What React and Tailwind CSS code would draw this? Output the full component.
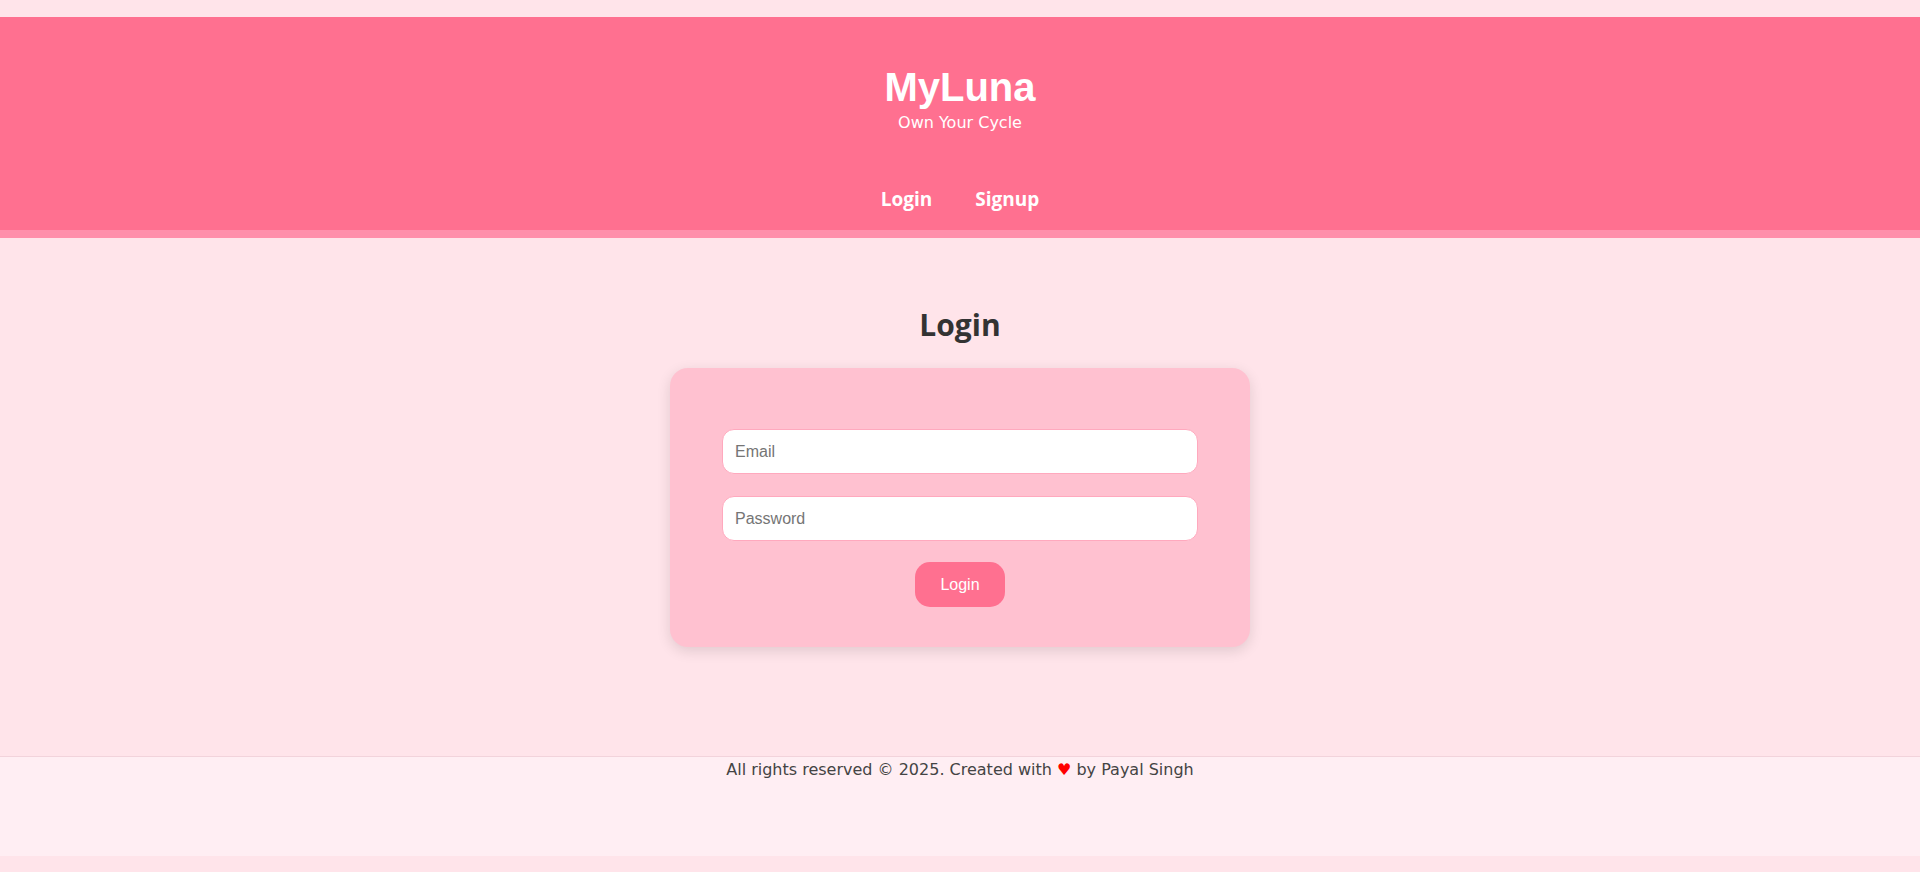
import React, { useState } from 'react';

const Header = () => (
  <header className="bg-[#ff7090] border-b-[8px] border-[#ff8fab] pt-[50px] pb-[19px] flex flex-col items-center text-white">
    <h1 className="text-[40px] leading-none font-bold font-['Liberation_Sans',Arial,sans-serif]">MyLuna</h1>
    <p className="mt-[6px] text-[16px] leading-[20px] font-['DejaVu_Sans',sans-serif]">Own Your Cycle</p>
    <nav className="mt-[54px] flex gap-[43px] text-[19px] leading-[24px] font-bold font-['Open_Sans',sans-serif]">
      <a href="#" className="hover:underline">Login</a>
      <a href="#" className="hover:underline">Signup</a>
    </nav>
  </header>
);

const LoginForm = () => {
  const [email, setEmail] = useState('');
  const [password, setPassword] = useState('');

  const handleSubmit = (e) => {
    e.preventDefault();
  };

  return (
    <form
      onSubmit={handleSubmit}
      className="w-[580px] bg-[#ffc1d0] rounded-[18px] pt-[61px] pb-[40px] px-[52px] flex flex-col items-center gap-[22px] shadow-[0_4px_14px_rgba(0,0,0,0.12)]"
    >
      <input
        type="email"
        placeholder="Email"
        value={email}
        onChange={(e) => setEmail(e.target.value)}
        className="w-full h-[45px] px-[12px] bg-white rounded-[12px] border border-[#ffa9be] text-[16px] text-[#333] placeholder:text-[#757575] outline-none font-['Liberation_Sans',Arial,sans-serif]"
      />
      <input
        type="password"
        placeholder="Password"
        value={password}
        onChange={(e) => setPassword(e.target.value)}
        className="w-full h-[45px] px-[12px] bg-white rounded-[12px] border border-[#ffa9be] text-[16px] text-[#333] placeholder:text-[#757575] outline-none font-['Liberation_Sans',Arial,sans-serif]"
      />
      <button
        type="submit"
        className="-mt-px w-[90px] h-[45px] bg-[#ff7090] text-white rounded-[15px] text-[16px] font-['Liberation_Sans',Arial,sans-serif] hover:bg-[#ff5c82] transition-colors"
      >
        Login
      </button>
    </form>
  );
};

const App = () => (
  <div className="min-h-[872px] bg-[#ffe4ea] pt-[17px] pb-[15px] flex flex-col">
    <Header />

    <main className="flex flex-col items-center">
      <h2 className="mt-[72px] text-[30px] leading-none font-bold text-[#333] font-['Open_Sans',sans-serif]">Login</h2>
      <div className="mt-[28px]">
        <LoginForm />
      </div>
    </main>

    {/* Footer */}
    <footer className="mt-[109px] h-[100px] bg-[#ffeef3] border-t border-[#f2d3db] text-center pt-[3px] text-[16px] leading-[20px] text-[#444] font-['DejaVu_Sans',sans-serif]">
      All rights reserved © 2025. Created with <span className="text-[#ff0000]">♥</span> by Payal Singh
    </footer>
  </div>
);

export default App;
